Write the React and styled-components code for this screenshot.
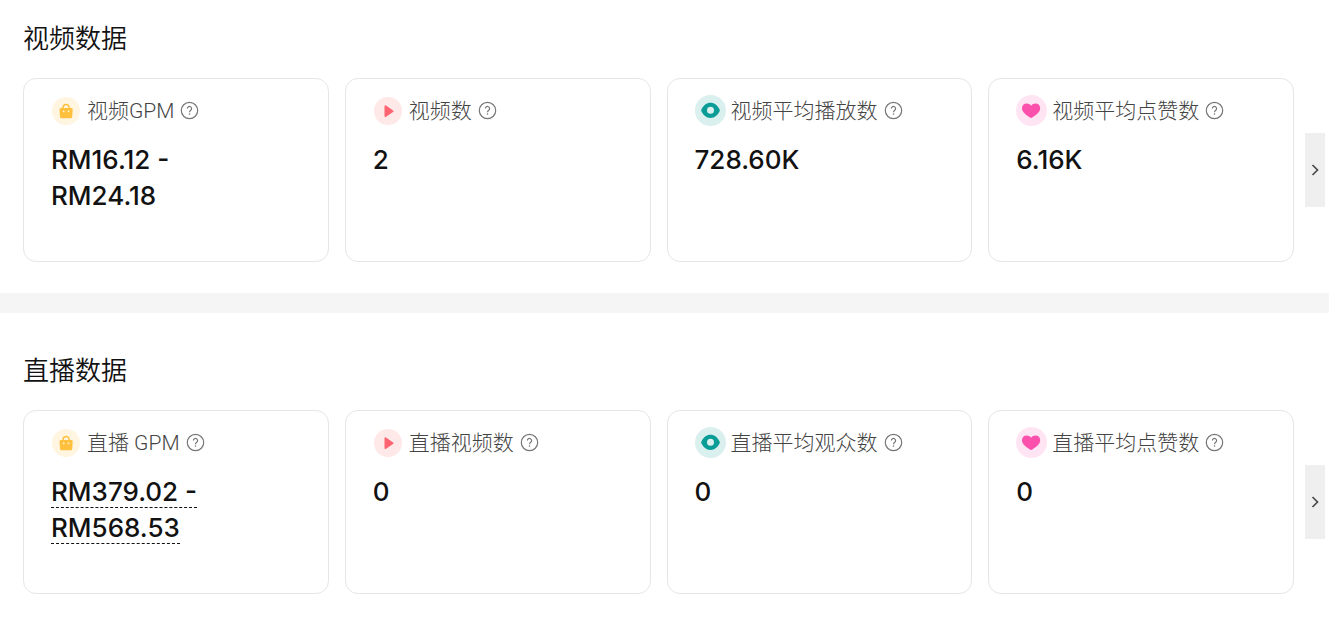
import React from "react";
import styled, { createGlobalStyle } from "styled-components";

const GlobalStyle = createGlobalStyle`
  * { box-sizing: border-box; }
  body {
    margin: 0;
    background: #fff;
    color: #121212;
    font-family: Roboto, "Noto Sans CJK SC", sans-serif;
  }
`;

const Section = styled.section`
  padding: ${(p) => (p.$first ? 21 : 40)}px 4px 31px 23px;
  border-bottom: ${(p) => (p.$first ? "20px solid #f5f5f5" : "0")};
`;

const Title = styled.h2`
  margin: 0 0 21px;
  font-size: 26px;
  line-height: 36px;
  font-weight: 350;
`;

const Carousel = styled.div`
  display: flex;
  align-items: center;
  gap: 11px;
`;

const Cards = styled.div`
  flex: 1;
  display: grid;
  grid-template-columns: repeat(4, minmax(0, 1fr));
  gap: 16px;
`;

const Card = styled.article`
  min-height: 184px;
  padding: 16px 27px;
  border: 1px solid #e6e6e6;
  border-radius: 13px;
`;

const CardHead = styled.div`
  display: flex;
  align-items: center;
  height: 31px;
`;

const Badge = styled.svg`
  flex: none;
  width: 31px;
  height: 31px;
  margin-right: 5px;
`;

const Label = styled.h3`
  margin: 0;
  font-size: 21px;
  line-height: 30px;
  font-weight: 300;
  color: #444;
  white-space: nowrap;
`;

const HelpButton = styled.button`
  display: flex;
  margin: 0 0 0 6px;
  padding: 0;
  border: 0;
  background: none;
  color: #757575;
  cursor: pointer;
`;

const Value = styled.p`
  margin: 16px 0 0;
  font-family: Inter, "Noto Sans CJK SC", sans-serif;
  font-size: 26px;
  line-height: 36px;
  font-weight: 500;
`;

const Amount = styled.span`
  border-bottom: ${(p) => (p.$dashed ? "1px dashed #121212" : "0")};
`;

const NextButton = styled.button`
  flex: none;
  display: flex;
  align-items: center;
  justify-content: center;
  width: 20px;
  height: 74px;
  padding: 0;
  border: 0;
  background: #efefef;
  color: #4a4a4a;
  cursor: pointer;
`;

const badges = {
  bag: (
    <>
      <circle cx="15" cy="16" r="14" fill="#fff5e0" />
      <path d="M12.1 14v-1.600a3 3 0 0 1 6 0V14" fill="none" stroke="#ffc13d" strokeWidth="1.5" />
      <path d="M10 12.900h10.200a1.500 1.500 0 0 1 1.500 1.700l-.5 7.200a1.600 1.600 0 0 1-1.600 1.500h-9a1.600 1.600 0 0 1-1.600-1.500l-.5-7.200A1.500 1.500 0 0 1 10 12.900Z" fill="#ffc13d" />
      <circle cx="12.700" cy="16.300" r=".9" fill="#fff5e0" />
      <circle cx="17.500" cy="16.300" r=".9" fill="#fff5e0" />
    </>
  ),
  play: (
    <>
      <circle cx="15" cy="16" r="14" fill="#ffe8e8" />
      <path d="M12.5 11.4v9.6l7-4.8Z" fill="#ff6470" stroke="#ff6470" strokeWidth="2" strokeLinejoin="round" />
    </>
  ),
  eye: (
    <>
      <circle cx="15.5" cy="15.5" r="15.5" fill="#daf0ee" />
      <path d="M6.4 14.5C8.4 10.4 11.600 7.700 15.500 7.700s7.100 2.700 9.100 6.800a1.800 1.800 0 0 1 0 1.700C22.600 20.200 19.400 22.900 15.500 22.900S8.400 20.200 6.400 16.200a1.800 1.800 0 0 1 0-1.700Z" fill="#0a9c96" />
      <circle cx="15.5" cy="15.3" r="3.500" fill="#daf0ee" />
    </>
  ),
  heart: (
    <>
      <circle cx="15.5" cy="15.5" r="15.5" fill="#ffe5f3" />
      <path d="M15.100 23.100C10.800 20.500 6 17.500 6 13.200c0-2.800 2-4.700 4.600-4.700 1.800 0 3.500.9 4.500 2.300 1-1.400 2.700-2.300 4.500-2.300 2.600 0 4.600 1.900 4.600 4.700 0 4.300-4.800 7.300-9.100 9.900Z" fill="#fb50ab" />
    </>
  ),
};

const sections = [
  {
    title: "视频数据",
    items: [
      { icon: "bag", label: "视频GPM", value: ["RM16.12 -", "RM24.18"] },
      { icon: "play", label: "视频数", value: ["2"] },
      { icon: "eye", label: "视频平均播放数", value: ["728.60K"] },
      { icon: "heart", label: "视频平均点赞数", value: ["6.16K"] },
    ],
  },
  {
    title: "直播数据",
    items: [
      { icon: "bag", label: "直播 GPM", value: ["RM379.02 -", "RM568.53"], dashed: true },
      { icon: "play", label: "直播视频数", value: ["0"] },
      { icon: "eye", label: "直播平均观众数", value: ["0"] },
      { icon: "heart", label: "直播平均点赞数", value: ["0"] },
    ],
  },
];

function Help({ label }) {
  return (
    <HelpButton type="button" aria-label={label}>
      <svg width="19" height="19" viewBox="0 0 19 19" fill="none" stroke="currentColor">
        <circle cx="9.5" cy="9.5" r="8.2" strokeWidth="1.2" />
        <path d="M7.400 7.600a2.100 2.100 0 1 1 3.300 1.700c-.8.6-1.200.9-1.200 1.900" strokeWidth="1.200" />
        <circle cx="9.5" cy="13" r=".8" fill="currentColor" stroke="none" />
      </svg>
    </HelpButton>
  );
}

function MetricCard({ icon, label, value, dashed }) {
  return (
    <Card>
      <CardHead>
        <Badge viewBox="0 0 31 31" aria-hidden="true">{badges[icon]}</Badge>
        <Label>{label}</Label>
        <Help label={label} />
      </CardHead>
      <Value>
        {value.map((line, i) => (
          <React.Fragment key={line}>
            {i > 0 && <br />}
            <Amount $dashed={dashed}>{line}</Amount>
          </React.Fragment>
        ))}
      </Value>
    </Card>
  );
}

export default function App() {
  return (
    <main>
      <GlobalStyle />
      {sections.map((section, i) => (
        <Section key={section.title} $first={i === 0}>
          <Title>{section.title}</Title>
          <Carousel>
            <Cards>
              {section.items.map((item) => (
                <MetricCard key={item.label} {...item} />
              ))}
            </Cards>
            <NextButton type="button" aria-label={section.title}>
              <svg width="12" height="14" viewBox="0 0 12 14" fill="none" stroke="currentColor" strokeWidth="1.7">
                <path d="M3.5 2l5 5-5 5" />
              </svg>
            </NextButton>
          </Carousel>
        </Section>
      ))}
    </main>
  );
}
